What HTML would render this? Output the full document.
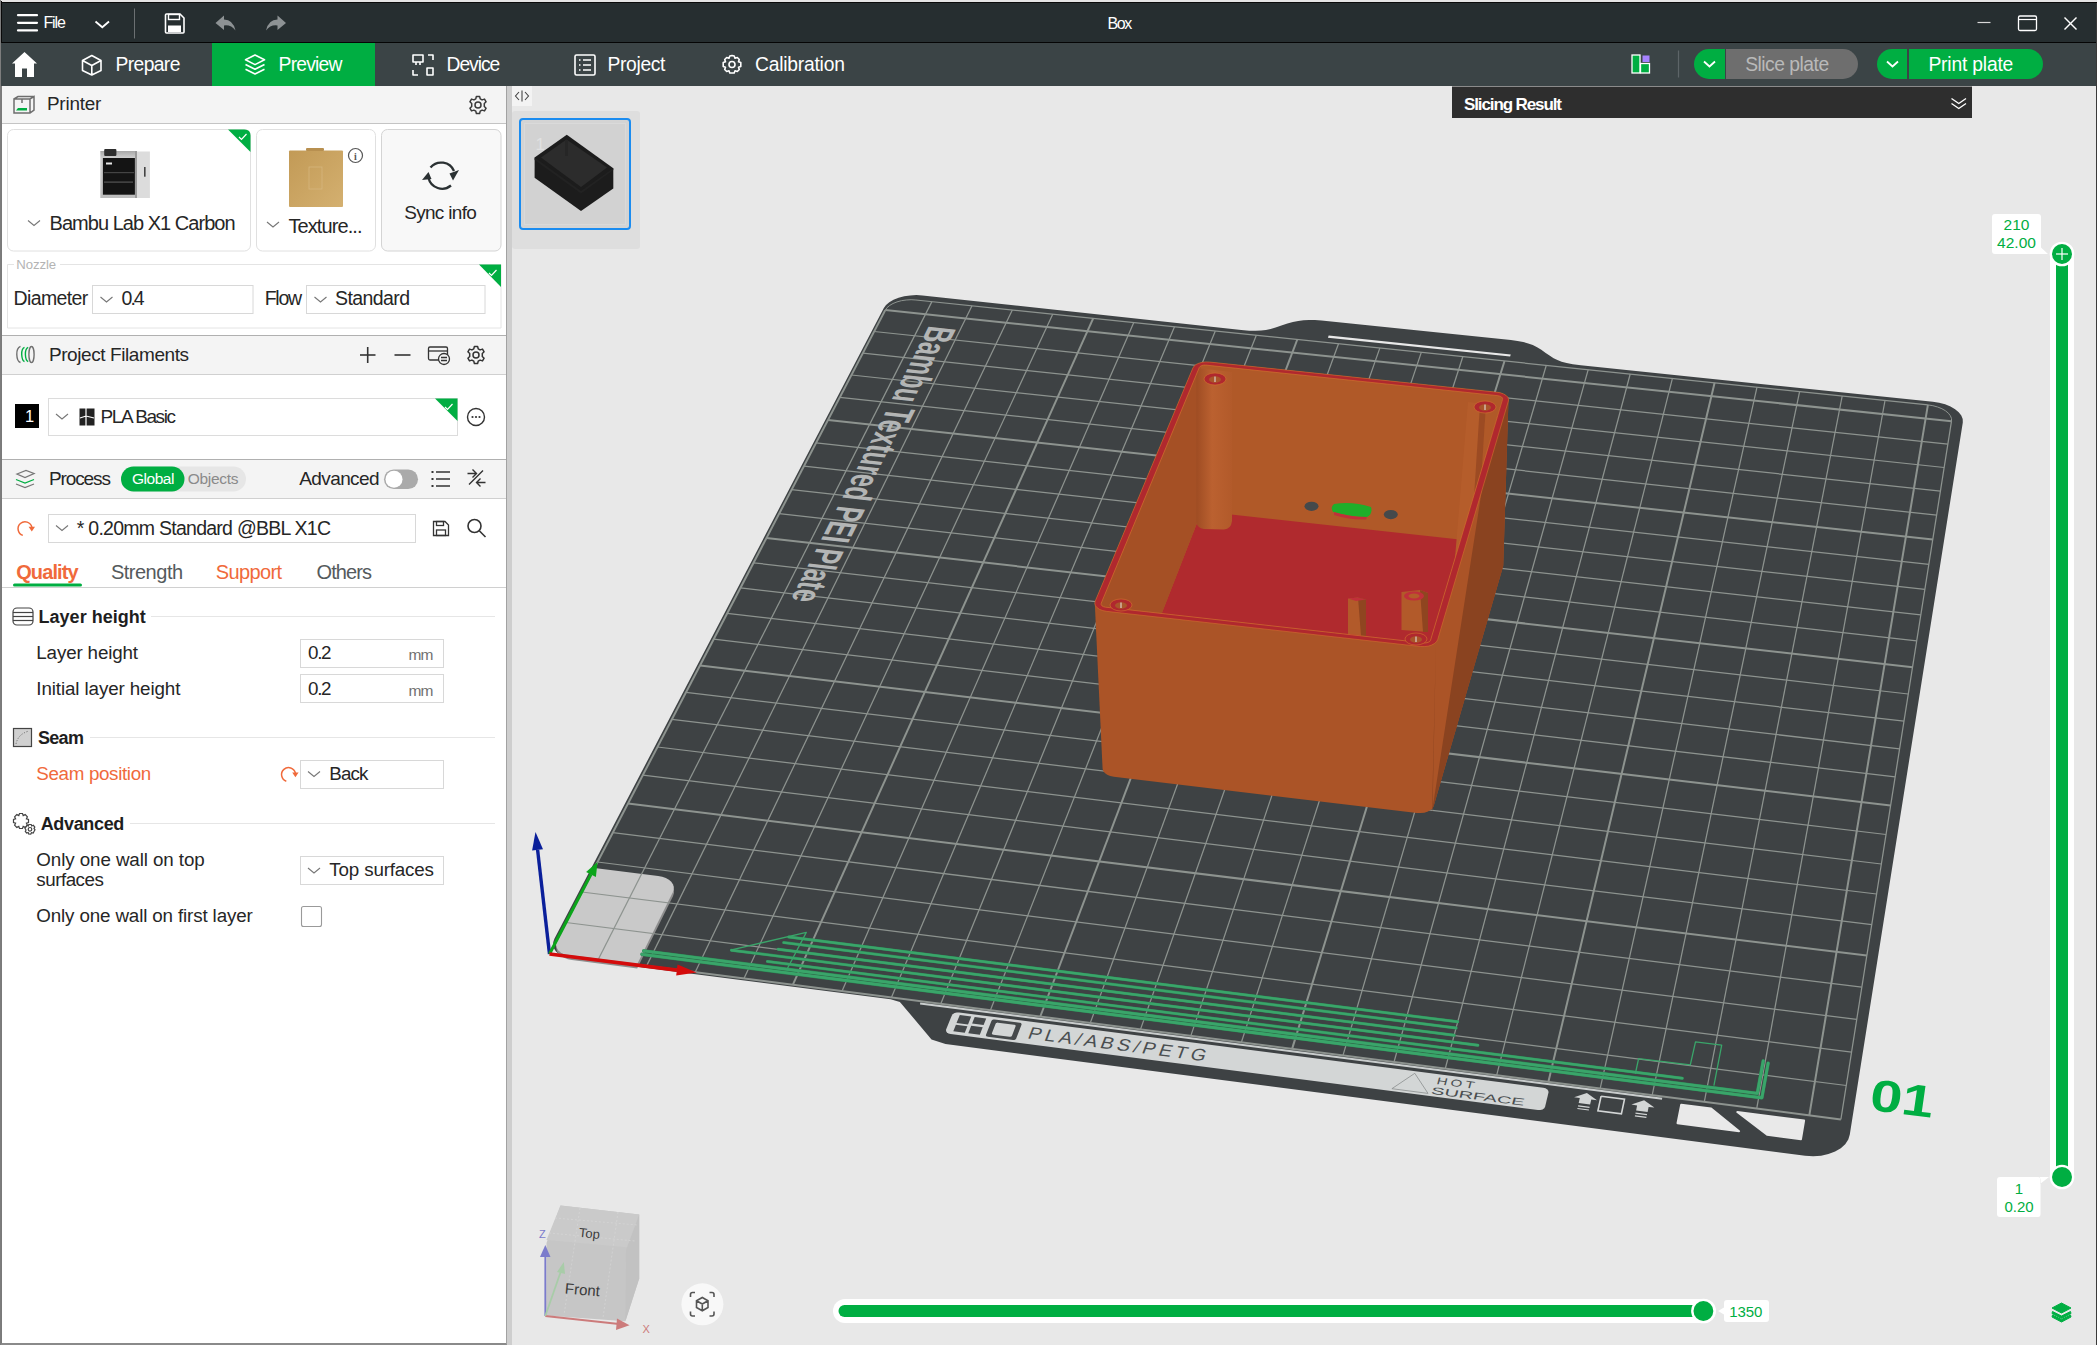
<!DOCTYPE html>
<html><head><meta charset="utf-8">
<style>
*{box-sizing:border-box;margin:0;padding:0}
html,body{width:2097px;height:1345px;overflow:hidden;background:#e8e8e8;font-family:"Liberation Sans",sans-serif;position:relative}
.abs{position:absolute}
#title{left:0;top:0;width:2097px;height:43px;background:#262e30;border-top:1px solid #e8e8e8;border-bottom:1px solid #050505}
#nav{left:0;top:43px;width:2097px;height:43px;background:#3b4446}
#panel{left:0;top:86px;width:507px;height:1259px;background:#fff;border-left:2px solid #7a7a7a;border-right:1px solid #a2a2a2;border-bottom:2px solid #8a8a8a}
#rb{right:0;top:0;width:1.5px;height:1345px;background:#3a3a3a}
#sep{left:507px;top:86px;width:5px;height:1259px;background:#cecece}
#scene{left:0;top:0}
.t{position:absolute;white-space:nowrap;color:#262626;line-height:1}
</style></head><body>
<svg id="scene" class="abs" width="2097" height="1345" viewBox="0 0 2097 1345">
<polygon points="571.0,958.2 566.3,957.3 562.1,955.8 558.5,953.7 555.8,951.2 553.9,948.3 553.1,945.2 553.3,942.0 554.4,938.8 883.7,308.2 886.0,305.1 889.3,302.3 893.5,299.8 898.6,297.8 904.2,296.3 910.2,295.4 916.4,295.1 922.5,295.4 1241.3,330.1 1249.2,330.7 1255.7,330.8 1261.1,330.6 1265.9,330.0 1270.6,329.0 1275.6,327.5 1281.4,325.6 1281.4,325.6 1287.4,323.6 1292.9,322.1 1298.2,320.9 1303.5,320.3 1309.0,320.0 1314.9,320.1 1321.5,320.6 1510.9,340.1 1510.9,340.1 1517.5,341.0 1523.2,342.0 1528.2,343.4 1532.8,345.1 1537.1,347.2 1541.3,349.8 1545.7,352.9 1545.7,352.9 1549.9,355.8 1553.6,358.2 1557.4,360.1 1561.6,361.7 1566.6,363.0 1572.8,364.2 1580.8,365.3 1932.8,401.8 1939.1,402.7 1945.1,404.3 1950.5,406.5 1955.1,409.2 1958.7,412.2 1961.3,415.5 1962.7,418.9 1962.8,422.4 1849.8,1134.5 1848.3,1139.6 1845.2,1144.2 1840.8,1148.3 1835.1,1151.6 1828.4,1154.1 1821.1,1155.7 1813.2,1156.2 1805.2,1155.7 945.5,1044.0 931.5,1039.4 899.9,1001.9 890.6,999.3" fill="#3e4244" />
<polygon points="1327.9,337.8 1510.1,356.6 1510.8,354.4 1328.7,335.6" fill="#e9e9e9" />
<polygon points="557.5,943.2 556.5,945.9 556.3,948.7 557.1,951.4 558.7,953.9 561.0,956.1 564.1,957.8 567.8,959.2 571.9,960.0 637.2,968.4 673.1,895.9 674.0,893.1 674.0,890.4 673.2,887.9 671.6,885.5 669.2,883.4 666.1,881.7 662.5,880.4 658.5,879.6 594.7,871.6" fill="#8e8e8e" />
<polygon points="557.1,939.5 556.1,942.3 556.0,945.0 556.7,947.7 558.3,950.2 560.7,952.4 563.8,954.2 567.4,955.5 571.5,956.3 636.9,964.7 672.8,892.2 673.7,889.5 673.8,886.8 672.9,884.2 671.3,881.8 668.9,879.7 665.8,878.0 662.2,876.8 658.2,876.0 594.4,868.0" fill="#c9c9c9" />
<line x1="549.8" y1="953.5" x2="885.3" y2="310.1" stroke="#8d938f" stroke-width="2.0"/>
<line x1="549.8" y1="953.5" x2="1840.9" y2="1119.4" stroke="#8d938f" stroke-width="2.0"/>
<line x1="598.1" y1="959.7" x2="931.9" y2="301.6" stroke="#8d938f" stroke-width="1.25"/>
<line x1="566.0" y1="922.5" x2="1846.3" y2="1085.5" stroke="#8d938f" stroke-width="1.25"/>
<line x1="646.6" y1="965.9" x2="972.0" y2="305.8" stroke="#8d938f" stroke-width="1.25"/>
<line x1="581.9" y1="892.0" x2="1851.6" y2="1052.1" stroke="#8d938f" stroke-width="1.25"/>
<line x1="695.2" y1="972.2" x2="1012.3" y2="310.0" stroke="#8d938f" stroke-width="1.25"/>
<line x1="597.5" y1="862.0" x2="1856.7" y2="1019.4" stroke="#8d938f" stroke-width="1.25"/>
<line x1="744.0" y1="978.4" x2="1052.7" y2="314.2" stroke="#8d938f" stroke-width="1.25"/>
<line x1="612.9" y1="832.6" x2="1861.8" y2="987.2" stroke="#8d938f" stroke-width="1.25"/>
<line x1="792.9" y1="984.7" x2="1093.2" y2="318.4" stroke="#8d938f" stroke-width="2.0"/>
<line x1="628.0" y1="803.6" x2="1866.8" y2="955.6" stroke="#8d938f" stroke-width="2.0"/>
<line x1="842.1" y1="991.0" x2="1133.8" y2="322.6" stroke="#8d938f" stroke-width="1.25"/>
<line x1="642.9" y1="775.1" x2="1871.8" y2="924.6" stroke="#8d938f" stroke-width="1.25"/>
<line x1="891.4" y1="997.4" x2="1174.5" y2="326.8" stroke="#8d938f" stroke-width="1.25"/>
<line x1="657.5" y1="747.0" x2="1876.6" y2="894.0" stroke="#8d938f" stroke-width="1.25"/>
<line x1="940.8" y1="1003.7" x2="1215.3" y2="331.0" stroke="#8d938f" stroke-width="1.25"/>
<line x1="671.9" y1="719.4" x2="1881.4" y2="864.0" stroke="#8d938f" stroke-width="1.25"/>
<line x1="990.5" y1="1010.1" x2="1256.3" y2="335.3" stroke="#8d938f" stroke-width="1.25"/>
<line x1="686.0" y1="692.3" x2="1886.0" y2="834.5" stroke="#8d938f" stroke-width="1.25"/>
<line x1="1040.3" y1="1016.5" x2="1297.3" y2="339.5" stroke="#8d938f" stroke-width="2.0"/>
<line x1="700.0" y1="665.5" x2="1890.6" y2="805.5" stroke="#8d938f" stroke-width="2.0"/>
<line x1="1090.3" y1="1022.9" x2="1338.5" y2="343.8" stroke="#8d938f" stroke-width="1.25"/>
<line x1="713.7" y1="639.2" x2="1895.2" y2="776.9" stroke="#8d938f" stroke-width="1.25"/>
<line x1="1140.5" y1="1029.4" x2="1379.8" y2="348.1" stroke="#8d938f" stroke-width="1.25"/>
<line x1="727.2" y1="613.3" x2="1899.6" y2="748.8" stroke="#8d938f" stroke-width="1.25"/>
<line x1="1190.8" y1="1035.9" x2="1421.3" y2="352.4" stroke="#8d938f" stroke-width="1.25"/>
<line x1="740.5" y1="587.9" x2="1904.0" y2="721.2" stroke="#8d938f" stroke-width="1.25"/>
<line x1="1241.4" y1="1042.3" x2="1462.8" y2="356.7" stroke="#8d938f" stroke-width="1.25"/>
<line x1="753.6" y1="562.8" x2="1908.3" y2="694.0" stroke="#8d938f" stroke-width="1.25"/>
<line x1="1292.1" y1="1048.9" x2="1504.5" y2="361.0" stroke="#8d938f" stroke-width="2.0"/>
<line x1="766.4" y1="538.0" x2="1912.6" y2="667.2" stroke="#8d938f" stroke-width="2.0"/>
<line x1="1343.0" y1="1055.4" x2="1546.3" y2="365.3" stroke="#8d938f" stroke-width="1.25"/>
<line x1="779.1" y1="513.7" x2="1916.7" y2="640.9" stroke="#8d938f" stroke-width="1.25"/>
<line x1="1394.0" y1="1062.0" x2="1588.2" y2="369.7" stroke="#8d938f" stroke-width="1.25"/>
<line x1="791.6" y1="489.7" x2="1920.8" y2="614.9" stroke="#8d938f" stroke-width="1.25"/>
<line x1="1445.3" y1="1068.5" x2="1630.2" y2="374.0" stroke="#8d938f" stroke-width="1.25"/>
<line x1="804.0" y1="466.1" x2="1924.9" y2="589.4" stroke="#8d938f" stroke-width="1.25"/>
<line x1="1496.7" y1="1075.2" x2="1672.4" y2="378.4" stroke="#8d938f" stroke-width="1.25"/>
<line x1="816.1" y1="442.8" x2="1928.9" y2="564.3" stroke="#8d938f" stroke-width="1.25"/>
<line x1="1548.4" y1="1081.8" x2="1714.6" y2="382.8" stroke="#8d938f" stroke-width="2.0"/>
<line x1="828.0" y1="419.9" x2="1932.8" y2="539.5" stroke="#8d938f" stroke-width="2.0"/>
<line x1="1600.2" y1="1088.4" x2="1757.0" y2="387.2" stroke="#8d938f" stroke-width="1.25"/>
<line x1="839.8" y1="397.3" x2="1936.7" y2="515.1" stroke="#8d938f" stroke-width="1.25"/>
<line x1="1652.2" y1="1095.1" x2="1799.6" y2="391.6" stroke="#8d938f" stroke-width="1.25"/>
<line x1="851.4" y1="375.0" x2="1940.5" y2="491.1" stroke="#8d938f" stroke-width="1.25"/>
<line x1="1704.3" y1="1101.8" x2="1842.2" y2="396.0" stroke="#8d938f" stroke-width="1.25"/>
<line x1="862.9" y1="353.1" x2="1944.2" y2="467.5" stroke="#8d938f" stroke-width="1.25"/>
<line x1="1756.7" y1="1108.6" x2="1885.0" y2="400.5" stroke="#8d938f" stroke-width="1.25"/>
<line x1="874.1" y1="331.5" x2="1947.9" y2="444.2" stroke="#8d938f" stroke-width="1.25"/>
<line x1="1809.3" y1="1115.3" x2="1927.9" y2="404.9" stroke="#8d938f" stroke-width="2.0"/>
<line x1="885.3" y1="310.1" x2="1951.5" y2="421.2" stroke="#8d938f" stroke-width="2.0"/>
<line x1="1840.9" y1="1119.4" x2="1951.5" y2="421.2" stroke="#8d938f" stroke-width="1.25"/>
<line x1="915.9" y1="300.0" x2="1927.9" y2="404.9" stroke="#8d938f" stroke-width="1.25"/>
<polyline points="885.3,310.1 887.0,307.7 889.6,305.5 893.0,303.5 897.0,301.9 901.4,300.7 906.2,300.0 911.1,299.7 915.9,300.0" fill="none" stroke="#8d938f" stroke-width="1.0" />
<polyline points="1927.9,404.9 1932.9,405.7 1937.6,407.0 1941.9,408.7 1945.5,410.8 1948.4,413.2 1950.4,415.8 1951.5,418.5 1951.5,421.2" fill="none" stroke="#8d938f" stroke-width="1.0" />
<polyline points="920.1,1003.4 1662.1,1098.8" fill="none" stroke="#c9cdcd" stroke-width="2.0" />
<polygon points="946.2,1029.3 946.0,1030.9 946.8,1032.3 948.4,1033.4 950.6,1034.0 1537.9,1110.0 1540.3,1110.0 1542.6,1109.4 1544.3,1108.3 1545.1,1106.8 1548.5,1092.5 1548.4,1090.9 1547.3,1089.5 1545.5,1088.3 1543.2,1087.7 959.2,1012.5 956.8,1012.5 954.5,1013.1 952.7,1014.2 951.7,1015.7" fill="#d3d6d6" />
<polygon points="1681.2,1104.8 1711.1,1108.6 1739.1,1131.2 1677.5,1123.2" fill="#e9e9e9" stroke="#e9e9e9" stroke-width="2" stroke-linejoin="round"/>
<polygon points="1737.3,1112.0 1804.1,1120.6 1801.0,1139.2 1767.1,1134.8" fill="#e9e9e9" stroke="#e9e9e9" stroke-width="2" stroke-linejoin="round"/>
<text transform="matrix(5.0183,0.6489,-1.2486,3.2764,1026.8,1038.3)" font-family="Liberation Sans" font-size="5.0" fill="#4a4e50" text-anchor="start" font-weight="normal" letter-spacing="0.9" textLength="36" lengthAdjust="spacingAndGlyphs">PLA/ABS/PETG</text>
<text transform="matrix(5.1540,0.6651,-0.8988,3.3579,1435.9,1083.9)" font-family="Liberation Sans" font-size="2.9" fill="#4a4e50" text-anchor="start" font-weight="normal" letter-spacing="0.6">HOT</text>
<text transform="matrix(5.1665,0.6686,-0.9059,3.3754,1430.6,1093.7)" font-family="Liberation Sans" font-size="2.9" fill="#4a4e50" text-anchor="start" font-weight="normal" textLength="18" lengthAdjust="spacingAndGlyphs">SURFACE</text>
<polyline points="1391.9,1088.7 1414.8,1073.3 1428.0,1093.4 1391.9,1088.7" fill="none" stroke="#8a8e8e" stroke-width="0.8" />
<polygon points="1574.1,1097.2 1586.9,1093.0 1597.0,1100.2 1591.3,1099.5 1590.1,1104.5 1578.7,1103.1 1579.8,1098.0" fill="#d3d6d6" />
<polyline points="1578.1,1105.8 1589.5,1107.3" fill="none" stroke="#d3d6d6" stroke-width="1.2" />
<polyline points="1577.4,1108.5 1588.9,1110.0" fill="none" stroke="#d3d6d6" stroke-width="1.2" />
<polygon points="1631.4,1104.6 1644.1,1100.3 1654.4,1107.6 1648.6,1106.9 1647.6,1112.0 1636.1,1110.5 1637.1,1105.4" fill="#d3d6d6" />
<polyline points="1635.5,1113.2 1647.0,1114.7" fill="none" stroke="#d3d6d6" stroke-width="1.2" />
<polyline points="1634.9,1115.9 1646.4,1117.4" fill="none" stroke="#d3d6d6" stroke-width="1.2" />
<polyline points="1601.1,1096.2 1624.5,1099.2 1621.4,1113.8 1597.9,1110.8 1601.1,1096.2" fill="none" stroke="#d3d6d6" stroke-width="1.6" />
<polygon points="956.5,1023.1 968.0,1024.6 971.2,1016.5 959.8,1015.0" fill="#45494b" />
<polygon points="972.1,1023.4 983.6,1024.9 986.2,1018.4 974.7,1016.9" fill="#45494b" />
<polygon points="953.3,1031.2 964.8,1032.7 967.4,1026.2 955.9,1024.7" fill="#45494b" />
<polygon points="968.3,1033.2 979.8,1034.7 982.7,1027.2 971.2,1025.7" fill="#45494b" />
<polygon points="986.0,1034.8 985.9,1035.2 986.0,1035.7 986.3,1036.1 986.7,1036.4 987.3,1036.6 987.9,1036.8 1013.0,1040.0 1013.6,1040.0 1014.3,1039.9 1014.9,1039.8 1015.4,1039.5 1015.8,1039.1 1016.1,1038.7 1021.5,1024.7 1021.6,1024.2 1021.5,1023.8 1021.2,1023.4 1020.8,1023.1 1020.2,1022.8 1019.6,1022.7 994.7,1019.5 994.0,1019.5 993.3,1019.5 992.7,1019.7 992.2,1020.0 991.8,1020.4 991.5,1020.8" fill="#45494b" />
<polygon points="991.9,1033.2 991.9,1033.5 991.9,1033.8 992.2,1034.2 992.5,1034.4 992.9,1034.6 993.4,1034.7 1009.5,1036.8 1010.0,1036.8 1010.5,1036.8 1011.0,1036.6 1011.4,1036.4 1011.8,1036.1 1012.0,1035.7 1015.6,1026.3 1015.7,1025.9 1015.6,1025.6 1015.4,1025.3 1015.0,1025.0 1014.6,1024.8 1014.1,1024.7 998.1,1022.7 997.6,1022.6 997.1,1022.7 996.6,1022.9 996.1,1023.1 995.8,1023.4 995.6,1023.7" fill="#d3d6d6" />
<text transform="matrix(-1.1793,2.3394,-4.2150,-0.4622,859.9,462.8)" font-family="Liberation Sans" font-size="9.4" fill="#b3b5b5" text-anchor="middle" font-weight="bold" textLength="117.6" lengthAdjust="spacingAndGlyphs">Bambu Textured PEI Plate</text>
<text transform="matrix(5.2797,0.6759,-0.4882,3.4120,1900.1,1113.7)" font-family="Liberation Sans" font-size="13" fill="#00ae42" text-anchor="middle" font-weight="bold" textLength="12" lengthAdjust="spacingAndGlyphs">01</text><polygon points="1102.6,768.8 1094.8,603.4 1095.2,601.2 1192.9,367.9 1194.1,366.1 1196.2,364.4 1198.9,363.2 1202.2,362.3 1205.7,361.9 1209.3,362.0 1497.0,392.2 1500.4,392.8 1503.5,393.9 1506.0,395.4 1507.7,397.1 1508.5,399.1 1503.3,564.1 1503.2,566.0 1433.7,806.0 1432.6,808.2 1430.6,810.1 1427.8,811.6 1424.4,812.7 1420.7,813.1 1416.9,813.0 1113.8,776.7 1110.2,776.0 1107.2,774.7 1104.8,773.0 1103.2,771.0" fill="#ab5427" />
<polygon points="1432.0,812.1 1497.0,392.2 1500.4,392.8 1503.5,393.9 1506.0,395.4 1507.7,397.1 1508.5,399.1 1503.3,564.1 1503.2,566.0 1433.7,806.0 1432.6,808.2 1435.9,645.6" fill="#8a4320" />
<defs><linearGradient id="rfg" gradientUnits="userSpaceOnUse" x1="1433.1" y1="736.4" x2="1438.1" y2="719.1"><stop offset="0" stop-color="#9c4a22"/><stop offset="1" stop-color="#8a4320" stop-opacity="0"/></linearGradient>
<linearGradient id="fg" gradientUnits="userSpaceOnUse" x1="1394.2" y1="731.8" x2="1433.1" y2="736.4"><stop offset="0" stop-color="#a04e24" stop-opacity="0"/><stop offset="1" stop-color="#9a4a22" stop-opacity="0.8"/></linearGradient>
<linearGradient id="pg" gradientUnits="userSpaceOnUse" x1="1196" y1="0" x2="1232" y2="0"><stop offset="0" stop-color="#9e4c23"/><stop offset="0.45" stop-color="#bb6130"/><stop offset="1" stop-color="#b25a2a"/></linearGradient></defs>
<clipPath id="inner"><polygon points="1101.2,603.2 1101.1,604.5 1101.9,605.8 1103.5,606.7 1105.6,607.2 1423.7,642.9 1426.0,642.9 1428.2,642.3 1429.8,641.4 1430.6,640.1 1502.6,399.3 1502.5,398.1 1501.6,397.0 1500.0,396.2 1498.0,395.7 1205.9,365.1 1203.8,365.1 1201.8,365.5 1200.2,366.4 1199.3,367.4"/></clipPath>
<g clip-path="url(#inner)">
<rect x="1090" y="340" width="430" height="480" fill="#b05928"/>
<polygon points="1106.7,754.6 1426.3,792.5 1499.0,543.9 1201.6,511.2" fill="#b02a2e" />
<polygon points="1106.7,754.6 1201.6,511.2 1200.6,364.5 1099.8,606.6" fill="#a55025" />
<path d="M1196.4,368 L1232,372 L1232,521 Q1231,529 1224,529.5 L1204,529 Q1197,528 1196.4,522 Z" fill="url(#pg)"/>
<polygon points="1468,402 1486,404 1476,560 1455,558" fill="#b55d2b"/>
<polygon points="1480,404 1486,404 1476,560 1470,559" fill="#9c4b23"/>
<ellipse cx="1311.5" cy="506.3" rx="7" ry="4.6" fill="#45494b"/>
<ellipse cx="1390.8" cy="514.6" rx="7" ry="4.6" fill="#45494b"/>
<path d="M1334,504 Q1352,501 1371,507 Q1373,514 1367,517 Q1350,517 1333,512 Q1330,507 1334,504 Z" fill="#1fae2a"/>
<path d="M1334,512 Q1350,517 1367,517 L1366,519.5 Q1350,520 1334,515 Z" fill="#c0303a"/>
<polygon points="1348,598.5 1358,597.5 1366,599.5 1366,636 1348,634" fill="#b25a2a"/>
<polygon points="1358,597.5 1366,599.5 1366,636 1361,636" fill="#8f4520"/>
<polygon points="1348,598.5 1358,597.5 1366,599.5 1356,601" fill="#c0303a"/>
<polygon points="1401.5,592 1420,590 1428,593 1428,632 1401.5,630" fill="#b25a2a"/>
<polygon points="1420,590 1428,593 1428,632 1423,632" fill="#8f4520"/>
<ellipse cx="1414" cy="596" rx="10" ry="4.5" fill="#c0303a"/><ellipse cx="1414" cy="596" rx="5.5" ry="2.6" fill="#b45c2a"/>
</g>
<path d="M1095.2,601.2 L1094.8,603.4 L1095.4,605.6 L1097.0,607.6 L1099.4,609.3 L1102.6,610.5 L1106.2,611.3 L1420.3,646.5 L1424.2,646.6 L1428.1,646.2 L1431.5,645.1 L1434.4,643.6 L1436.5,641.7 L1437.7,639.6 L1508.4,401.0 L1508.5,399.1 L1507.7,397.1 L1506.0,395.4 L1503.5,393.9 L1500.4,392.8 L1497.0,392.2 L1209.3,362.0 L1205.7,361.9 L1202.2,362.3 L1198.9,363.2 L1196.2,364.4 L1194.1,366.1 L1192.9,367.9 Z M1101.2,603.2 L1101.1,604.5 L1101.9,605.8 L1103.5,606.7 L1105.6,607.2 L1423.7,642.9 L1426.0,642.9 L1428.2,642.3 L1429.8,641.4 L1430.6,640.1 L1502.6,399.3 L1502.5,398.1 L1501.6,397.0 L1500.0,396.2 L1498.0,395.7 L1205.9,365.1 L1203.8,365.1 L1201.8,365.5 L1200.2,366.4 L1199.3,367.4 Z" fill="#b0282e" fill-rule="evenodd"/>
<polygon points="1101.2,603.2 1101.1,604.5 1101.9,605.8 1103.5,606.7 1105.6,607.2 1423.7,642.9 1426.0,642.9 1428.2,642.3 1429.8,641.4 1430.6,640.1 1502.6,399.3 1502.5,398.1 1501.6,397.0 1500.0,396.2 1498.0,395.7 1205.9,365.1 1203.8,365.1 1201.8,365.5 1200.2,366.4 1199.3,367.4" fill="none" stroke="#d4742f" stroke-width="0.8" stroke-opacity="0.8"/>
<polygon points="1095.2,601.2 1094.8,603.4 1095.4,605.6 1097.0,607.6 1099.4,609.3 1102.6,610.5 1106.2,611.3 1420.3,646.5 1424.2,646.6 1428.1,646.2 1431.5,645.1 1434.4,643.6 1436.5,641.7 1437.7,639.6 1508.4,401.0 1508.5,399.1 1507.7,397.1 1506.0,395.4 1503.5,393.9 1500.4,392.8 1497.0,392.2 1209.3,362.0 1205.7,361.9 1202.2,362.3 1198.9,363.2 1196.2,364.4 1194.1,366.1 1192.9,367.9" fill="none" stroke="#d4742f" stroke-width="0.8" stroke-opacity="0.7"/>
<ellipse cx="1215" cy="379" rx="11" ry="6" fill="#b0282e" stroke="#d4742f" stroke-width="0.6"/>
<ellipse cx="1215" cy="379.5" rx="6" ry="3.2" fill="#a9552a"/>
<line x1="1215" y1="376.5" x2="1215" y2="382" stroke="#e8e8e8" stroke-width="1"/>
<ellipse cx="1485" cy="407" rx="11" ry="6" fill="#b0282e" stroke="#d4742f" stroke-width="0.6"/>
<ellipse cx="1485" cy="407.5" rx="6" ry="3.2" fill="#a9552a"/>
<line x1="1485" y1="404.5" x2="1485" y2="410" stroke="#e8e8e8" stroke-width="1"/>
<ellipse cx="1121" cy="605" rx="11" ry="6" fill="#b0282e" stroke="#d4742f" stroke-width="0.6"/>
<ellipse cx="1121" cy="605.5" rx="6" ry="3.2" fill="#a9552a"/>
<line x1="1121" y1="602.5" x2="1121" y2="608" stroke="#e8e8e8" stroke-width="1"/>
<ellipse cx="1416" cy="639" rx="11" ry="6" fill="#b0282e" stroke="#d4742f" stroke-width="0.6"/>
<ellipse cx="1416" cy="639.5" rx="6" ry="3.2" fill="#a9552a"/>
<line x1="1416" y1="636.5" x2="1416" y2="642" stroke="#e8e8e8" stroke-width="1"/><polyline points="788.8,937.0 1457.7,1021.8" fill="none" stroke="#2b8a55" stroke-width="3.0" stroke-linecap="round" stroke-linejoin="round" />
<polyline points="788.8,937.0 1457.7,1021.8" fill="none" stroke="#3aa56a" stroke-width="2.4" stroke-linecap="round" stroke-linejoin="round" />
<polyline points="783.7,942.6 1456.1,1028.0" fill="none" stroke="#2b8a55" stroke-width="3.0" stroke-linecap="round" stroke-linejoin="round" />
<polyline points="783.7,942.6 1456.1,1028.0" fill="none" stroke="#3aa56a" stroke-width="2.4" stroke-linecap="round" stroke-linejoin="round" />
<polyline points="778.1,949.2 1454.2,1035.2" fill="none" stroke="#2b8a55" stroke-width="3.0" stroke-linecap="round" stroke-linejoin="round" />
<polyline points="778.1,949.2 1454.2,1035.2" fill="none" stroke="#3aa56a" stroke-width="2.4" stroke-linecap="round" stroke-linejoin="round" />
<polyline points="731.4,950.2 1477.9,1045.3" fill="none" stroke="#2b8a55" stroke-width="3.0" stroke-linecap="round" stroke-linejoin="round" />
<polyline points="731.4,950.2 1477.9,1045.3" fill="none" stroke="#3aa56a" stroke-width="2.4" stroke-linecap="round" stroke-linejoin="round" />
<polyline points="767.4,961.4 1682.3,1078.3" fill="none" stroke="#2b8a55" stroke-width="3.0" stroke-linecap="round" stroke-linejoin="round" />
<polyline points="767.4,961.4 1682.3,1078.3" fill="none" stroke="#3aa56a" stroke-width="2.4" stroke-linecap="round" stroke-linejoin="round" />
<polyline points="642.0,954.3 1761.9,1097.8 1768.1,1063.2" fill="none" stroke="#2b8a55" stroke-width="3.4" stroke-linecap="round" stroke-linejoin="round" />
<polyline points="642.0,954.3 1761.9,1097.8 1768.1,1063.2" fill="none" stroke="#3aa56a" stroke-width="2.8" stroke-linecap="round" stroke-linejoin="round" />
<polyline points="643.7,950.9 1757.3,1093.4 1763.2,1060.9" fill="none" stroke="#2b8a55" stroke-width="3.4" stroke-linecap="round" stroke-linejoin="round" />
<polyline points="643.7,950.9 1757.3,1093.4 1763.2,1060.9" fill="none" stroke="#3aa56a" stroke-width="2.8" stroke-linecap="round" stroke-linejoin="round" />
<polyline points="731.6,949.8 806.3,932.4 787.0,969.2" fill="none" stroke="#3aa56a" stroke-width="1.3" stroke-linecap="round" stroke-linejoin="round" />
<polyline points="1635.5,1073.0 1638.6,1058.7 1690.3,1064.9 1695.5,1041.9 1721.7,1045.2 1714.0,1085.1" fill="none" stroke="#3aa56a" stroke-width="1.3" stroke-linecap="round" stroke-linejoin="round" />
<line x1="549.5" y1="954.0" x2="537.6" y2="849.9" stroke="#0a1f9a" stroke-width="3.4"/>
<polygon points="535.5,832.0 543.0,849.3 532.1,850.5" fill="#0a1f9a"/>
<line x1="549.5" y1="954.0" x2="591.0" y2="874.4" stroke="#0aa51a" stroke-width="3.0"/>
<polygon points="597.5,862.0 595.9,877.0 586.1,871.9" fill="#0aa51a"/>
<line x1="549.5" y1="954.0" x2="676.9" y2="970.1" stroke="#d40b0b" stroke-width="3.6"/>
<polygon points="696.7,972.6 676.2,975.5 677.5,964.6" fill="#d40b0b"/>
</svg>
<div id="title" class="abs">
<svg class="abs" style="left:0;top:-1px" width="2097" height="43" viewBox="0 -1 2097 43">
<g stroke="#fff" stroke-width="2.2" stroke-linecap="round"><line x1="18" y1="14.2" x2="37" y2="14.2"/><line x1="18" y1="21.8" x2="37" y2="21.8"/><line x1="18" y1="29.4" x2="37" y2="29.4"/></g>
<polyline points="95.5,20.5 102.3,26.3 109,20.5" fill="none" stroke="#fff" stroke-width="1.8"/>
<line x1="134.5" y1="7.5" x2="134.5" y2="37.5" stroke="#6b7072" stroke-width="1"/>
<path d="M165.5,14 Q165.5,13 166.5,13 L180,13 L184,17 L184,31 Q184,32 183,32 L166.5,32 Q165.5,32 165.5,31 Z" fill="none" stroke="#fff" stroke-width="1.6"/>
<rect x="168.5" y="13.5" width="11" height="5" fill="none" stroke="#fff" stroke-width="1.4"/>
<rect x="168" y="24.5" width="13" height="6.5" fill="#fff"/>
<path d="M215.5,22 L224,14.5 L224,18.5 Q233,18.5 235.5,29.5 Q231,23.5 224,24.5 L224,29 Z" fill="#8d9294"/>
<path d="M286,22 L277.5,14.5 L277.5,18.5 Q268.5,18.5 266,29.5 Q270.5,23.5 277.5,24.5 L277.5,29 Z" fill="#8d9294"/>
<line x1="1977.5" y1="21.5" x2="1990.5" y2="21.5" stroke="#d8d8d8" stroke-width="1.2"/>
<rect x="2018.5" y="15" width="18" height="14.5" rx="1.5" fill="none" stroke="#fff" stroke-width="1.3"/>
<line x1="2018.5" y1="18.5" x2="2036.5" y2="18.5" stroke="#fff" stroke-width="1.2"/>
<g stroke="#fff" stroke-width="1.4"><line x1="2064.5" y1="16.5" x2="2076.5" y2="28.5"/><line x1="2076.5" y1="16.5" x2="2064.5" y2="28.5"/></g>
</svg>

</div>
<div id="nav" class="abs">
<div class="abs" style="left:212px;top:0;width:163px;height:43px;background:#00ae42"></div>
<svg class="abs" style="left:0;top:0" width="2097" height="43" viewBox="0 43 2097 43">
<path d="M24.5,52 L12,63.5 L15,63.5 L15,77 L22,77 L22,68.5 L27,68.5 L27,77 L34,77 L34,63.5 L37,63.5 Z" fill="#fff"/>
<g fill="none" stroke="#fff" stroke-width="1.6" stroke-linejoin="round">
<path d="M91.8,55.5 L101,60.5 L101,70.5 L91.8,75 L82.5,70.5 L82.5,60.5 Z M82.5,60.5 L91.8,65.5 L101,60.5 M91.8,65.5 L91.8,75"/>
<path d="M255,55 L264.5,59.8 L255,64.6 L245.5,59.8 Z M245.5,64.5 L255,69.3 L264.5,64.5 M245.5,69.3 L255,74 L264.5,69.3"/>
<path d="M413,55 L423,55 L423,62 L413,62 Z M416,62 L416,65 M420,62 L420,65 M413,70 L413,75 L418,75 M428,55 L433,55 L433,60 M427,68 L433,68 L433,75 L427,75 Z"/>
<rect x="575" y="55" width="20" height="20" rx="1.5"/>
<path d="M579,60 L580.5,60 M583,60 L591,60 M579,65 L580.5,65 M583,65 L591,65 M579,70 L580.5,70 M583,70 L591,70"/>
<circle cx="732" cy="64.5" r="3"/>
<path d="M732,55.5 L734.2,56 L735,58.3 L737.3,57.5 L739.3,59.5 L738.5,61.8 L740.8,62.6 L740.8,66.4 L738.5,67.2 L739.3,69.5 L737.3,71.5 L735,70.7 L734.2,73 L729.8,73 L729,70.7 L726.7,71.5 L724.7,69.5 L725.5,67.2 L723.2,66.4 L723.2,62.6 L725.5,61.8 L724.7,59.5 L726.7,57.5 L729,58.3 L729.8,56 Z"/>
</g>
<rect x="1632" y="55" width="8" height="18" fill="#00ae42" stroke="#fff" stroke-width="1.3"/>
<rect x="1640.5" y="63.5" width="9" height="9.5" fill="#00ae42" stroke="#fff" stroke-width="1.3"/>
<rect x="1642.5" y="55.5" width="7" height="6.5" fill="#a682ff"/>
<line x1="1678.5" y1="50.5" x2="1678.5" y2="77.5" stroke="#5d6568" stroke-width="1.2"/>
<path d="M1709,49 L1725,49 L1725,79 L1709,79 A15,15 0 0 1 1709,49 Z" fill="#00ae42"/>
<path d="M1726,49 L1843,49 A15,15 0 0 1 1843,79 L1726,79 Z" fill="#6e6e6e"/>
<polyline points="1704,61.5 1709.5,66.5 1715,61.5" fill="none" stroke="#fff" stroke-width="1.8"/>
<path d="M1892,49 L1907,49 L1907,79 L1892,79 A15,15 0 0 1 1892,49 Z" fill="#00ae42"/>
<path d="M1909,49 L2028,49 A15,15 0 0 1 2028,79 L1909,79 Z" fill="#00ae42"/>
<polyline points="1887,61.5 1892.5,66.5 1898,61.5" fill="none" stroke="#fff" stroke-width="1.8"/>
</svg>

</div>
<div id="panel" class="abs">

</div>
<div id="sep" class="abs"></div>
<div id="rb" class="abs"></div>
<div class="abs" style="left:0;top:0;width:2097px;height:2px;background:#e4e4e4"></div>
<div class="abs" style="left:0;top:2px;width:2097px;height:1px;background:#0a0a0a"></div>
<div class="abs" style="left:1px;top:1px;width:1px;height:42px;background:#0a0a0a"></div>
<div class="abs" style="left:0;top:0;width:1px;height:1345px;background:#7d7d7d"></div>
<!-- ===== LEFT PANEL ===== -->
<div class="abs" style="left:2px;top:86px;width:504px;height:38px;background:#f4f4f4;border-bottom:1px solid #c4c4c4"></div>
<div class="abs" style="left:2px;top:335px;width:504px;height:40px;background:#f4f4f4;border-top:1px solid #b0b0b0;border-bottom:1px solid #d0d0d0"></div>
<div class="abs" style="left:2px;top:459px;width:504px;height:40px;background:#f4f4f4;border-top:1px solid #b0b0b0;border-bottom:1px solid #d0d0d0"></div>
<div class="abs" style="left:2px;top:587px;width:504px;height:1px;background:#d0d0d0"></div>
<svg class="abs" style="left:0;top:0" width="507" height="1345" viewBox="0 0 507 1345">
<!-- printer icon -->
<g fill="none" stroke="#6e6e6e" stroke-width="1.5"><path d="M14,99 L30,99 L34,96.5 L34,110 L30,113 L14,113 Z M14,99 L18,96.5 L34,96.5 M30,99 L30,113"/><line x1="22" y1="99" x2="22" y2="103"/></g>
<path d="M16,110.5 L18,108 L27,108 L27,110.5 Z" fill="#00ae42"/>
<!-- gear printer -->
<g transform="translate(478,105)"><path d="M-1.6,-8.6 L1.6,-8.6 L2.2,-6.2 L4.1,-5.1 L6.5,-5.9 L8.1,-3.2 L6.3,-1.5 L6.3,1.5 L8.1,3.2 L6.5,5.9 L4.1,5.1 L2.2,6.2 L1.6,8.6 L-1.6,8.6 L-2.2,6.2 L-4.1,5.1 L-6.5,5.9 L-8.1,3.2 L-6.3,1.5 L-6.3,-1.5 L-8.1,-3.2 L-6.5,-5.9 L-4.1,-5.1 L-2.2,-6.2 Z" fill="none" stroke="#3a3a3a" stroke-width="1.5" stroke-linejoin="round"/><circle r="3" fill="none" stroke="#3a3a3a" stroke-width="1.5"/></g>
<!-- cards -->
<rect x="7.5" y="129.5" width="243" height="121.5" rx="6" fill="#fff" stroke="#e0e0e0"/>
<path d="M228,129.5 L244.5,129.5 Q250.5,129.5 250.5,135.5 L250.5,152 Z" fill="#00ae42"/>
<polyline points="239,137 241.5,139.5 246.5,134" fill="none" stroke="#fff" stroke-width="1.2"/>
<rect x="256.5" y="129.5" width="119" height="121.5" rx="6" fill="#fff" stroke="#e0e0e0"/>
<rect x="381.5" y="129.5" width="119.5" height="121.5" rx="6" fill="#f8f8f8" stroke="#d4d4d4"/>
<!-- printer image -->
<defs><linearGradient id="prg" x1="0" y1="0" x2="0" y2="1"><stop offset="0" stop-color="#a8a8a8"/><stop offset="0.15" stop-color="#d0d0d0"/><stop offset="1" stop-color="#bdbdbd"/></linearGradient>
<linearGradient id="plg" x1="0" y1="0" x2="1" y2="1"><stop offset="0" stop-color="#c29a56"/><stop offset="1" stop-color="#d4b070"/></linearGradient></defs>
<rect x="100.3" y="151" width="36" height="47" fill="url(#prg)"/>
<rect x="136.3" y="151.5" width="13.6" height="46.5" fill="#dcdcdc"/>
<rect x="135" y="151" width="2" height="47" fill="#9a9a9a"/>
<rect x="102.9" y="158" width="32" height="36.7" fill="#141414"/>
<rect x="104" y="172" width="30" height="1.2" fill="#444"/>
<rect x="104" y="181.5" width="29" height="1.2" fill="#555"/>
<rect x="106" y="162.5" width="6" height="2" fill="#e8e8e8"/>
<rect x="104.2" y="149" width="12.2" height="7" rx="1" fill="#2e2e2e"/>
<rect x="144" y="167" width="1.6" height="9.7" fill="#444"/>
<!-- plate image -->
<rect x="289" y="150.5" width="54" height="56.5" rx="1" fill="url(#plg)"/>
<rect x="306" y="148" width="18" height="3" rx="1" fill="#b89050"/>
<rect x="309" y="167" width="13" height="22" fill="none" stroke="#d8b880" stroke-width="0.7"/>
<circle cx="355.5" cy="155.5" r="7" fill="none" stroke="#555" stroke-width="1.2"/>
<text x="355.5" y="159.5" font-family="Liberation Serif" font-size="10" font-weight="bold" fill="#555" text-anchor="middle">i</text>
<!-- sync icon -->
<g fill="none" stroke="#2b3133" stroke-width="2.3"><path d="M430.5,167.5 A14,14 0 0 1 454,171"/><path d="M451,185.5 A14,14 0 0 1 428.5,178"/></g>
<path d="M459,170 L453,180.5 L449.5,173.5 Z" fill="#2b3133"/><path d="M422,180 L428.5,172 L431.5,179 Z" fill="#2b3133"/>
<!-- nozzle group -->
<path d="M14,264.5 L7.5,264.5 L7.5,328 L501,328 L501,264.5 L60,264.5" fill="none" stroke="#e4e4e4"/>
<path d="M479,264.5 L501,264.5 L501,287 Z" fill="#00ae42"/>
<polyline points="489,273 491.5,275.5 496.5,270" fill="none" stroke="#fff" stroke-width="1.2"/>
<rect x="92.5" y="285.5" width="160.5" height="28" fill="#fff" stroke="#d8d8d8"/>
<rect x="306.5" y="285.5" width="178.5" height="28" fill="#fff" stroke="#d8d8d8"/>
<!-- project filaments icons -->
<g fill="none" stroke-width="1.4"><path d="M20.5,346.3 Q16.5,348 16.8,354.5 Q17,361.5 20.5,362.5" stroke="#707070"/><path d="M24.5,347.3 Q21.5,348.5 21.7,354.5 Q22,360.5 24.5,361.7" stroke="#00ae42"/><path d="M28.2,347.3 Q25.2,348.5 25.4,354.5 Q25.6,360.5 28.2,361.7" stroke="#00ae42"/><ellipse cx="31.5" cy="354.5" rx="2.6" ry="8" stroke="#707070"/></g>
<g stroke="#333" stroke-width="1.6"><line x1="360" y1="355" x2="375.5" y2="355"/><line x1="367.7" y1="347" x2="367.7" y2="363"/><line x1="394.5" y1="355" x2="410.5" y2="355"/></g>
<g fill="none" stroke="#333" stroke-width="1.3"><rect x="428.5" y="347" width="19" height="13" rx="1.5"/><line x1="428.5" y1="351" x2="447.5" y2="351"/><circle cx="444" cy="359" r="5.5" fill="#f4f4f4"/><path d="M441,357.5 L447,357.5 M441,360.5 L447,360.5"/></g>
<g transform="translate(476,355)"><path d="M-1.6,-8.6 L1.6,-8.6 L2.2,-6.2 L4.1,-5.1 L6.5,-5.9 L8.1,-3.2 L6.3,-1.5 L6.3,1.5 L8.1,3.2 L6.5,5.9 L4.1,5.1 L2.2,6.2 L1.6,8.6 L-1.6,8.6 L-2.2,6.2 L-4.1,5.1 L-6.5,5.9 L-8.1,3.2 L-6.3,1.5 L-6.3,-1.5 L-8.1,-3.2 L-6.5,-5.9 L-4.1,-5.1 L-2.2,-6.2 Z" fill="none" stroke="#333" stroke-width="1.5" stroke-linejoin="round"/><circle r="3" fill="none" stroke="#333" stroke-width="1.5"/></g>
<!-- filament row -->
<rect x="15" y="404" width="24" height="24" fill="#000"/>
<rect x="48.5" y="398.5" width="409" height="37" fill="#fff" stroke="#dcdcdc"/>
<path d="M435,398.5 L457.5,398.5 L457.5,421 Z" fill="#00ae42"/>
<polyline points="445,407 447.5,409.5 452.5,404" fill="none" stroke="#fff" stroke-width="1.2"/>
<rect x="79.5" y="408.5" width="15" height="17" fill="#222"/>
<path d="M86,408 L86,426 M80,418 L86,416 L94,418" stroke="#fff" stroke-width="1.2" fill="none"/>
<circle cx="476" cy="417" r="8.5" fill="none" stroke="#333" stroke-width="1.4"/>
<g fill="#333"><circle cx="472.5" cy="417" r="1.1"/><circle cx="476" cy="417" r="1.1"/><circle cx="479.5" cy="417" r="1.1"/></g>
<!-- process header -->
<g fill="none" stroke="#777" stroke-width="1.3"><path d="M17,474 L26,470.5 L34,473.5 L25,477.5 Z"/><path d="M16,479.5 L25,483 L34,479.5" stroke="#00ae42"/><path d="M16,484 L25,487.5 L34,484"/></g>
<rect x="121" y="466.5" width="125" height="25" rx="12.5" fill="#e6e6e6"/>
<rect x="121" y="466.5" width="63.5" height="25" rx="12.5" fill="#00ae42"/>
<rect x="384" y="469.5" width="34" height="19.5" rx="9.75" fill="#aaa"/>
<circle cx="394" cy="479.2" r="8.5" fill="#fff"/>
<g stroke="#333" stroke-width="1.5"><line x1="436" y1="472" x2="450" y2="472"/><line x1="436" y1="479" x2="450" y2="479"/><line x1="436" y1="486" x2="450" y2="486"/></g>
<g fill="#333"><rect x="431.5" y="471" width="2" height="2"/><rect x="431.5" y="478" width="2" height="2"/><rect x="431.5" y="485" width="2" height="2"/></g>
<g fill="none" stroke="#333" stroke-width="1.4"><path d="M467.5,473.5 L476.5,473.5 M472.5,469.5 L476.5,473.5 L472.5,477.5 M485.5,482.5 L476.5,482.5 M480.5,478.5 L476.5,482.5 L480.5,486.5 M483,470.5 L469,484.5"/></g>
<!-- preset row -->
<path d="M22.8,535.4 A7,7 0 1 1 31.9,527.3" fill="none" stroke="#f06a3b" stroke-width="1.5"/><path d="M28.6,526.8 L35,526.8 L31.8,531.5 Z" fill="#f06a3b"/>
<rect x="48.5" y="514.5" width="367" height="28" fill="#fff" stroke="#d8d8d8"/>
<g fill="none" stroke="#333" stroke-width="1.3"><path d="M433.5,521.5 L445,521.5 L448.5,525 L448.5,535.5 L433.5,535.5 Z"/><rect x="436.5" y="521.5" width="7" height="4"/><rect x="436.5" y="530" width="9" height="5.5"/></g>
<g fill="none" stroke="#333" stroke-width="1.6"><circle cx="474.5" cy="526" r="6.5"/><line x1="479.3" y1="530.8" x2="485.5" y2="537"/></g>
<rect x="13" y="583.5" width="69" height="3" rx="1.5" fill="#00ae42"/>
<!-- section icons -->
<g fill="none" stroke="#444" stroke-width="1.2"><rect x="13" y="608" width="20" height="17" rx="4"/><line x1="13" y1="612.5" x2="33" y2="612.5"/><line x1="13" y1="616.5" x2="33" y2="616.5"/><line x1="13" y1="620.5" x2="33" y2="620.5"/></g>
<rect x="13.5" y="728.5" width="18" height="18" fill="#d0d0d0" stroke="#444" stroke-width="1.2"/>
<path d="M16,744 Q18,734 29,731" fill="none" stroke="#555" stroke-width="0.8" stroke-dasharray="1.2,1.6"/>
<g fill="none" stroke="#444" stroke-width="1.2"><circle cx="21" cy="821" r="3"/><path d="M19.5,813.5 L22.5,813.5 L23.2,815.6 L25.2,814.6 L27.4,816.8 L26.4,818.8 L28.5,819.5 L28.5,822.5 L26.4,823.2 L27.4,825.2 L25.2,827.4 L23.2,826.4 L22.5,828.5 L19.5,828.5 L18.8,826.4 L16.8,827.4 L14.6,825.2 L15.6,823.2 L13.5,822.5 L13.5,819.5 L15.6,818.8 L14.6,816.8 L16.8,814.6 L18.8,815.6 Z" fill="#fff"/>
<circle cx="30" cy="829" r="2" fill="#fff"/><path d="M28.8,824.5 L31.2,824.5 L31.7,826 L33.3,825.3 L34.8,827 L34,828.4 L35,829.8 L34,831.5 L33.2,833 L31.5,832.6 L30.8,834.2 L28.6,834 L28.2,832.5 L26.6,833 L25.3,831.5 L26,830 L25,828.5 L26,827 L27,825.4 L28.5,826 Z" fill="#fff"/><circle cx="30" cy="829.3" r="1.8"/></g>
<g stroke="#e6e6e6" stroke-width="1"><line x1="151" y1="616.5" x2="495" y2="616.5"/><line x1="90" y1="737.5" x2="495" y2="737.5"/><line x1="130" y1="823.5" x2="495" y2="823.5"/></g>
<!-- inputs -->
<rect x="300.5" y="639.5" width="143" height="28" fill="#fff" stroke="#d8d8d8"/>
<rect x="300.5" y="674.5" width="143" height="28" fill="#fff" stroke="#d8d8d8"/>
<rect x="300.5" y="760.5" width="143" height="28" fill="#fff" stroke="#d8d8d8"/>
<rect x="300.5" y="856.5" width="143" height="28" fill="#fff" stroke="#d8d8d8"/>
<rect x="301.5" y="906.5" width="20" height="20" rx="2" fill="#fff" stroke="#9a9a9a" stroke-width="1.1"/>
<path d="M286.3,781.2 A7,7 0 1 1 295.4,773.1" fill="none" stroke="#f06a3b" stroke-width="1.5"/><path d="M292.2,772.6 L298.6,772.6 L295.4,777.3 Z" fill="#f06a3b"/>
<!-- chevrons -->
<g fill="none" stroke="#777" stroke-width="1.1"><polyline points="28,220.5 34,225.5 40,220.5"/><polyline points="267,222 273,227 279,222"/>
<polyline points="100.5,297 106.5,302 112.5,297"/><polyline points="314.5,297 320.5,302 326.5,297"/>
<polyline points="56,414 62,419 68,414"/><polyline points="56,525.5 62,530.5 68,525.5"/>
<polyline points="308,771.5 314,776.5 320,771.5"/><polyline points="308,868 314,873 320,868"/></g>
</svg>

<!-- collapse btn -->
<div class="abs" style="left:512px;top:86px;width:20px;height:20px;background:#f3f3f3"></div>
<svg class="abs" style="left:512px;top:86px" width="20" height="20" viewBox="0 0 20 20"><g fill="none" stroke="#444" stroke-width="1.1"><polyline points="7,6 3.5,10 7,14"/><polyline points="13,6 16.5,10 13,14"/><line x1="10" y1="4.5" x2="10" y2="15.5"/></g></svg>
<!-- plate list -->
<div class="abs" style="left:512px;top:111px;width:128px;height:138px;background:#dedede;border-radius:3px"></div>
<div class="abs" style="left:519px;top:118px;width:112px;height:112px;border:2px solid #1b8cf0;border-radius:4px;background:#d4d4d4"></div>
<div class="abs" style="left:524px;top:123px;width:102px;height:102px;background:#d2d2d2;border:1px solid #dadada"></div>
<svg class="abs" style="left:0;top:0" width="2097" height="1345" viewBox="0 0 2097 1345">
<polygon points="534.6,157.5 566.8,134.8 613.3,168.2 613.3,188.5 581,211 534.6,177.8" fill="#1c1c1c"/>
<polygon points="541,157.5 566.5,139.5 607,167.5 581,187" fill="#2c2c2c"/>
<polygon points="534.6,157.5 581,191 613.3,168.2 613.3,170 581,193.5 534.6,160" fill="#222"/>
<rect x="565" y="140" width="3" height="16" fill="#262626"/>
<text x="535.5" y="150" font-family="Liberation Sans" font-size="17" fill="#e4e4e4" fill-opacity="0.85">1</text>
<!-- slicing result -->
<rect x="1452" y="86.5" width="520" height="31.5" fill="#2e2e2e"/>
<g fill="none" stroke="#fff" stroke-width="1.4"><polyline points="1951.5,98.5 1958.8,103.5 1966,98.5"/><polyline points="1951.5,103.5 1958.8,108.5 1966,103.5"/></g>
<!-- vertical slider -->
<rect x="2050" y="242" width="24" height="946" rx="12" fill="#fff"/>
<rect x="2056" y="254" width="12" height="923" fill="#00ae42"/>
<circle cx="2062" cy="254" r="12.3" fill="#fff"/><circle cx="2062" cy="254" r="10" fill="#00ae42"/>
<g stroke="#fff" stroke-width="1.2"><line x1="2056" y1="254" x2="2068" y2="254"/><line x1="2062" y1="248" x2="2062" y2="260"/></g>
<circle cx="2062" cy="1177" r="12.3" fill="#fff"/><circle cx="2062" cy="1177" r="10" fill="#00ae42"/>
<path d="M1995,214 L2038,214 Q2041,214 2041,217 L2041,247.5 L2048,254 L1995,254 Q1992,254 1992,251 L1992,217 Q1992,214 1995,214 Z" fill="#fff"/>
<path d="M2000,1177 L2038,1177 Q2040.5,1177 2040.5,1180 L2040.5,1214 Q2040.5,1217 2038,1217 L2000,1217 Q1997,1217 1997,1214 L1997,1180 Q1997,1177 2000,1177 Z M2040,1184 L2049,1177 L2040,1177 Z" fill="#fff"/>
<!-- layers icon -->
<g fill="#00ae42" stroke="#00ae42" stroke-width="1" stroke-linejoin="round"><path d="M2061.5,1303 L2071,1308 L2061.5,1313 L2052,1308 Z"/><path d="M2052.5,1311.5 L2061.5,1316 L2070.5,1311.5 L2071,1313.5 L2061.5,1318.5 L2052,1313.5 Z"/><path d="M2052.5,1315 L2061.5,1319.5 L2070.5,1315 L2071,1317 L2061.5,1322 L2052,1317 Z"/></g>
<!-- horizontal slider -->
<rect x="833" y="1299" width="883" height="24" rx="12" fill="#fff"/>
<rect x="838.5" y="1305" width="865" height="12" rx="6" fill="#00ae42"/>
<circle cx="1703.4" cy="1311" r="12.3" fill="#fff"/><circle cx="1703.4" cy="1311" r="9.9" fill="#00ae42"/>
<path d="M1727,1300 L1766,1300 Q1769,1300 1769,1303 L1769,1319 Q1769,1322 1766,1322 L1727,1322 Q1724,1322 1724,1319 L1724,1314.5 L1718,1311 L1724,1307.5 L1724,1303 Q1724,1300 1727,1300 Z" fill="#fff"/>
<!-- camera button -->
<circle cx="702.4" cy="1304.3" r="21" fill="#f8f8f8"/>
<g fill="none" stroke="#555" stroke-width="1.6"><path d="M690.5,1297 L690.5,1294.5 Q690.5,1292.5 692.5,1292.5 L695,1292.5 M709.5,1292.5 L712,1292.5 Q714,1292.5 714,1294.5 L714,1297 M714,1311.5 L714,1314 Q714,1316 712,1316 L709.5,1316 M695,1316 L692.5,1316 Q690.5,1316 690.5,1314 L690.5,1311.5"/>
<path d="M702.3,1297.5 L708,1300.8 L708,1307.5 L702.3,1310.8 L696.5,1307.5 L696.5,1300.8 Z M696.5,1300.8 L702.3,1304 L708,1300.8 M702.3,1304 L702.3,1310.8"/></g>
<!-- view cube -->
<polygon points="560.5,1205.5 639.2,1214.5 639.2,1278.5 625.4,1321.3 546,1315.6 546.5,1243" fill="#c6c6c6"/>
<polygon points="560.5,1205.5 639.2,1214.5 635,1248 546.5,1240" fill="#cacaca"/>
<polygon points="639.2,1214.5 639.2,1278.5 625.4,1321.3 626,1250" fill="#c2c2c2"/>
<g stroke="#d8d8d8" stroke-width="0.6" stroke-dasharray="2,2" fill="none"><path d="M555,1218 L637,1225 M549,1233 L635,1241 M580,1208 L564,1315 M618,1212 L603,1318"/></g>
<line x1="545.3" y1="1316" x2="545.3" y2="1255" stroke="#7b7bcc" stroke-width="1.8"/><polygon points="540,1257 550.5,1257 545.3,1245" fill="#7b7bcc"/>
<line x1="545.3" y1="1316" x2="619" y2="1324" stroke="#cc7b7b" stroke-width="1.8"/><polygon points="617,1318.5 629.5,1325.3 616,1330" fill="#cc7b7b"/>
<line x1="545.3" y1="1316" x2="561" y2="1271" stroke="#a8cca8" stroke-width="1.8"/><polygon points="557,1272 565,1274 563.8,1262" fill="#a8cca8"/>
<text x="579" y="1238" font-family="Liberation Sans" font-size="13" fill="#3a3a3a" transform="rotate(6 590 1233)">Top</text>
<text x="565" y="1295" font-family="Liberation Sans" font-size="15" fill="#3a3a3a" transform="rotate(5 583 1289)">Front</text>
<text x="539" y="1237.5" font-family="Liberation Sans" font-size="11" fill="#7b7bcc">Z</text>
<text x="642.5" y="1333" font-family="Liberation Sans" font-size="11" fill="#cc7b7b">X</text>
</svg>
<div class="t" style="left:1992px;top:216px;width:49px;text-align:center;font-size:15.5px;color:#00ae42;line-height:18px">210<br>42.00</div>
<div class="t" style="left:1997px;top:1180px;width:44px;text-align:center;font-size:15px;color:#00ae42;line-height:18px">1<br>0.20</div>

<div class="t" style="left:43.4px;top:14.9px;font-size:16px;color:#fff;letter-spacing:-1.07px">File</div>
<div class="t" style="left:1107.5px;top:16.0px;font-size:16px;color:#fff;letter-spacing:-1.35px">Box</div>
<div class="t" style="left:115.5px;top:54.9px;font-size:19.3px;color:#fff;letter-spacing:-0.62px">Prepare</div>
<div class="t" style="left:278.6px;top:54.9px;font-size:19.3px;color:#fff;letter-spacing:-0.78px">Preview</div>
<div class="t" style="left:446.6px;top:54.9px;font-size:19.3px;color:#fff;letter-spacing:-1.06px">Device</div>
<div class="t" style="left:607.5px;top:54.9px;font-size:19.3px;color:#fff;letter-spacing:-0.35px">Project</div>
<div class="t" style="left:755.0px;top:54.9px;font-size:19.3px;color:#fff;letter-spacing:-0.23px">Calibration</div>
<div class="t" style="left:1745.2px;top:54.9px;font-size:19.3px;color:#b9b9b9;letter-spacing:-0.50px">Slice plate</div>
<div class="t" style="left:1928.4px;top:54.9px;font-size:19.3px;color:#fff;letter-spacing:-0.19px">Print plate</div>
<div class="t" style="left:46.9px;top:95.1px;font-size:18.9px;color:#262626;letter-spacing:-0.20px">Printer</div>
<div class="t" style="left:49.6px;top:213.4px;font-size:20px;color:#262626;letter-spacing:-0.97px">Bambu Lab X1 Carbon</div>
<div class="t" style="left:288.5px;top:215.5px;font-size:20px;color:#262626;letter-spacing:-0.92px">Texture...</div>
<div class="t" style="left:404.2px;top:202.7px;font-size:19px;color:#262626;letter-spacing:-0.69px">Sync info</div>
<div class="t" style="left:16.2px;top:258.1px;font-size:13.2px;color:#b4b4b4;letter-spacing:-0.06px">Nozzle</div>
<div class="t" style="left:13.6px;top:289.0px;font-size:19.5px;color:#262626;letter-spacing:-0.64px">Diameter</div>
<div class="t" style="left:121.6px;top:289.0px;font-size:19.5px;color:#262626;letter-spacing:-2.00px">0.4</div>
<div class="t" style="left:264.7px;top:289.0px;font-size:19.5px;color:#262626;letter-spacing:-1.23px">Flow</div>
<div class="t" style="left:335.0px;top:289.0px;font-size:19.5px;color:#262626;letter-spacing:-0.59px">Standard</div>
<div class="t" style="left:48.9px;top:345.4px;font-size:19px;color:#262626;letter-spacing:-0.41px">Project Filaments</div>
<div class="t" style="left:25.0px;top:408.3px;font-size:16.5px;color:#fff">1</div>
<div class="t" style="left:100.6px;top:407.4px;font-size:19px;color:#262626;letter-spacing:-1.40px">PLA Basic</div>
<div class="t" style="left:48.9px;top:468.9px;font-size:19px;color:#262626;letter-spacing:-1.10px">Process</div>
<div class="t" style="left:131.9px;top:470.7px;font-size:15.5px;color:#fff;letter-spacing:-0.44px">Global</div>
<div class="t" style="left:187.7px;top:470.7px;font-size:15.5px;color:#8a8a8a;letter-spacing:-0.30px">Objects</div>
<div class="t" style="left:299.2px;top:468.9px;font-size:19px;color:#262626;letter-spacing:-0.59px">Advanced</div>
<div class="t" style="left:76.8px;top:518.6px;font-size:19.5px;color:#262626;letter-spacing:-0.74px">* 0.20mm Standard @BBL X1C</div>
<div class="t" style="left:16.2px;top:561.6px;font-size:20px;color:#f06a3b;font-weight:bold;letter-spacing:-0.88px">Quality</div>
<div class="t" style="left:110.9px;top:561.6px;font-size:20px;color:#555a5c;letter-spacing:-0.49px">Strength</div>
<div class="t" style="left:215.8px;top:561.6px;font-size:20px;color:#f06a3b;letter-spacing:-0.65px">Support</div>
<div class="t" style="left:316.6px;top:561.6px;font-size:20px;color:#555a5c;letter-spacing:-0.92px">Others</div>
<div class="t" style="left:38.5px;top:607.8px;font-size:18px;color:#1e1e1e;font-weight:bold;letter-spacing:0.03px">Layer height</div>
<div class="t" style="left:36.3px;top:644.3px;font-size:18.8px;color:#262626;letter-spacing:-0.15px">Layer height</div>
<div class="t" style="left:36.3px;top:679.5px;font-size:18.8px;color:#262626;letter-spacing:-0.11px">Initial layer height</div>
<div class="t" style="left:308.1px;top:644.3px;font-size:18.8px;color:#262626;letter-spacing:-1.35px">0.2</div>
<div class="t" style="left:408.5px;top:647.4px;font-size:15.5px;color:#707070;letter-spacing:-1.00px">mm</div>
<div class="t" style="left:308.1px;top:679.5px;font-size:18.8px;color:#262626;letter-spacing:-1.35px">0.2</div>
<div class="t" style="left:408.5px;top:682.6px;font-size:15.5px;color:#707070;letter-spacing:-1.00px">mm</div>
<div class="t" style="left:38.0px;top:728.8px;font-size:18px;color:#1e1e1e;font-weight:bold;letter-spacing:-0.70px">Seam</div>
<div class="t" style="left:36.3px;top:764.7px;font-size:18.8px;color:#f06a3b;letter-spacing:-0.34px">Seam position</div>
<div class="t" style="left:329.3px;top:764.7px;font-size:18.8px;color:#262626;letter-spacing:-0.87px">Back</div>
<div class="t" style="left:40.7px;top:815.0px;font-size:18px;color:#1e1e1e;font-weight:bold;letter-spacing:-0.34px">Advanced</div>
<div class="t" style="left:36.3px;top:850.6px;font-size:18.8px;color:#262626;letter-spacing:-0.09px">Only one wall on top</div>
<div class="t" style="left:36.3px;top:871.2px;font-size:18.8px;color:#262626;letter-spacing:-0.49px">surfaces</div>
<div class="t" style="left:329.3px;top:860.6px;font-size:18.8px;color:#262626;letter-spacing:-0.16px">Top surfaces</div>
<div class="t" style="left:36.3px;top:907.0px;font-size:18.8px;color:#262626;letter-spacing:-0.14px">Only one wall on first layer</div>
<div class="t" style="left:1464.0px;top:95.8px;font-size:17px;color:#fff;font-weight:bold;letter-spacing:-1.11px">Slicing Result</div>
<div class="t" style="left:1729.3px;top:1304.3px;font-size:15px;color:#00ae42;letter-spacing:-0.07px">1350</div>
</body></html>
